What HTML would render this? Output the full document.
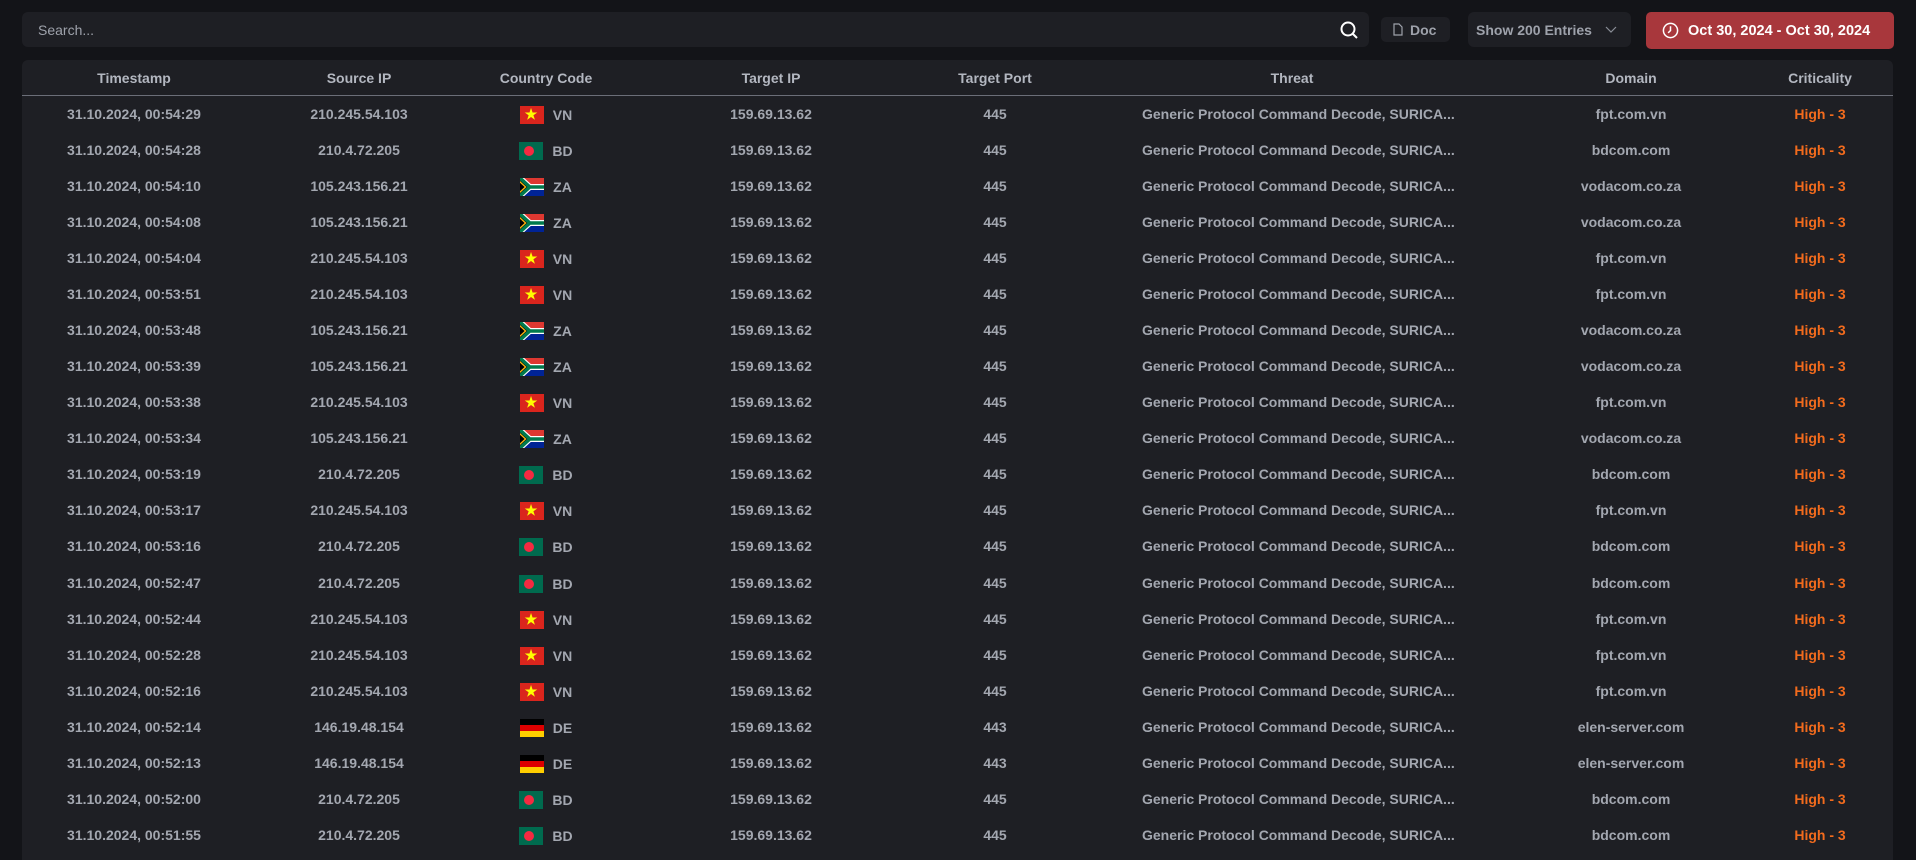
<!DOCTYPE html>
<html><head><meta charset="utf-8"><style>
*{margin:0;padding:0;box-sizing:border-box}
body{width:1916px;height:849px;background:#131418;font-family:"Liberation Sans",sans-serif;overflow:hidden;position:relative;color:#a3a7b0}
.search{position:absolute;left:22px;top:12px;width:1347px;height:35px;background:#1e1f24;border-radius:6px;font-size:14px;color:#9ea2ab;padding:10px 16px}
.search svg{position:absolute;right:10px;top:8px}
.doc{position:absolute;left:1381px;top:17px;width:69px;height:25px;background:#1e1f24;border-radius:5px;font-size:14px;font-weight:bold;color:#9ea2ab;padding:5px 0 0 29px}
.doc svg{position:absolute;left:12px;top:6px}
.show{position:absolute;left:1468px;top:12px;width:163px;height:35px;background:#1e1f24;border-radius:6px;font-size:14px;font-weight:bold;color:#9ea2ab;padding:10px 0 0 8px}
.show svg{position:absolute;right:14px;top:14px}
.date{position:absolute;left:1646px;top:12px;width:248px;height:37px;background:#a8373c;border-radius:5px;font-size:14.5px;font-weight:bold;color:#fff;padding:11px 0 0 42px}
.date svg{position:absolute;left:16px;top:10px}
.panel{position:absolute;left:22px;top:60px;width:1871px;height:800px;background:#1e1f24;border-radius:6px 6px 0 0}
.hline{position:absolute;left:22px;top:95px;width:1871px;height:1px;background:#6b6e78}
.c{position:absolute;width:300px;text-align:center;font-size:14px;font-weight:bold;white-space:nowrap}
.h .c{top:70px;color:#b3b7c0}
.r{position:absolute;left:0;width:1916px;height:36px}
.r .c{top:10px}
.c1{left:-16px}.c2{left:209px}.c3{left:396px}.c4{left:621px}.c5{left:845px}.c6{left:1142px}.c7{left:1481px}.c8{left:1670px;color:#f26b1d}
.f{display:inline-block;width:24px;height:18px;vertical-align:-4px;margin-right:9px;position:relative;overflow:hidden}
.vn{background:#da251d}.vn:after{content:"★";position:absolute;left:5px;top:0px;color:#ff0;font-size:14px}
.bd{background:#006a4e}.bd:after{content:"";position:absolute;left:5px;top:4px;width:10px;height:10px;border-radius:50%;background:#f42a41}
.de{background:linear-gradient(#000 33%,#dd0000 33%,#dd0000 66%,#ffce00 66%)}
</style></head><body>
<div class="search">Search...<svg width="20" height="20" viewBox="0 0 20 20" fill="none" stroke="#fff" stroke-width="2"><circle cx="9" cy="9" r="6.5"/><path d="M14 14l4 4"/></svg></div>
<div class="doc"><svg width="10" height="13" viewBox="0 0 10 13" fill="none" stroke="#9ea2ab" stroke-width="1.2"><path d="M1 1h5l3 3v8H1z"/></svg>Doc</div>
<div class="show">Show 200 Entries<svg width="12" height="8" viewBox="0 0 12 8" fill="none" stroke="#8a8e97" stroke-width="1.2"><path d="M1 1l5 5 5-5"/></svg></div>
<div class="date"><svg width="17" height="17" viewBox="0 0 18 18" fill="none" stroke="#fff" stroke-width="1.6"><circle cx="9" cy="9" r="7.5"/><path d="M9 4.5V9l-2.5 2.5"/></svg>Oct 30, 2024 - Oct 30, 2024</div>
<div class="panel"></div>
<div class="hline"></div>
<div class="h"><div class="c c1">Timestamp</div><div class="c c2">Source IP</div><div class="c c3">Country Code</div><div class="c c4">Target IP</div><div class="c c5">Target Port</div><div class="c c6">Threat</div><div class="c c7">Domain</div><div class="c c8" style="color:#b3b7c0">Criticality</div></div>
<svg width="0" height="0" style="position:absolute"><defs><symbol id="za" viewBox="0 0 22 15" preserveAspectRatio="none"><rect width="22" height="15" fill="#de3831"/><rect y="7.5" width="22" height="7.5" fill="#002395"/><path d="M0 0l9 7.5L0 15z" fill="#fff"/><path d="M0 0l9 7.5L0 15M9 7.5H22" stroke="#fff" stroke-width="5"/><path d="M0 0l9 7.5L0 15M9 7.5H22" stroke="#007a4d" stroke-width="3"/><path d="M0 2.5l6 5-6 5z" fill="#ffb612"/><path d="M0 4l4.2 3.5L0 11z" fill="#000"/></symbol></defs></svg>
<div class="r" style="top:96px"><div class="c c1">31.10.2024, 00:54:29</div><div class="c c2">210.245.54.103</div><div class="c c3"><span class="f vn"></span>VN</div><div class="c c4">159.69.13.62</div><div class="c c5">445</div><div class="c c6">Generic Protocol Command Decode, SURICA...</div><div class="c c7">fpt.com.vn</div><div class="c c8">High - 3</div></div>
<div class="r" style="top:132px"><div class="c c1">31.10.2024, 00:54:28</div><div class="c c2">210.4.72.205</div><div class="c c3"><span class="f bd"></span>BD</div><div class="c c4">159.69.13.62</div><div class="c c5">445</div><div class="c c6">Generic Protocol Command Decode, SURICA...</div><div class="c c7">bdcom.com</div><div class="c c8">High - 3</div></div>
<div class="r" style="top:168px"><div class="c c1">31.10.2024, 00:54:10</div><div class="c c2">105.243.156.21</div><div class="c c3"><svg class="f"><use href="#za"/></svg>ZA</div><div class="c c4">159.69.13.62</div><div class="c c5">445</div><div class="c c6">Generic Protocol Command Decode, SURICA...</div><div class="c c7">vodacom.co.za</div><div class="c c8">High - 3</div></div>
<div class="r" style="top:204px"><div class="c c1">31.10.2024, 00:54:08</div><div class="c c2">105.243.156.21</div><div class="c c3"><svg class="f"><use href="#za"/></svg>ZA</div><div class="c c4">159.69.13.62</div><div class="c c5">445</div><div class="c c6">Generic Protocol Command Decode, SURICA...</div><div class="c c7">vodacom.co.za</div><div class="c c8">High - 3</div></div>
<div class="r" style="top:240px"><div class="c c1">31.10.2024, 00:54:04</div><div class="c c2">210.245.54.103</div><div class="c c3"><span class="f vn"></span>VN</div><div class="c c4">159.69.13.62</div><div class="c c5">445</div><div class="c c6">Generic Protocol Command Decode, SURICA...</div><div class="c c7">fpt.com.vn</div><div class="c c8">High - 3</div></div>
<div class="r" style="top:276px"><div class="c c1">31.10.2024, 00:53:51</div><div class="c c2">210.245.54.103</div><div class="c c3"><span class="f vn"></span>VN</div><div class="c c4">159.69.13.62</div><div class="c c5">445</div><div class="c c6">Generic Protocol Command Decode, SURICA...</div><div class="c c7">fpt.com.vn</div><div class="c c8">High - 3</div></div>
<div class="r" style="top:312px"><div class="c c1">31.10.2024, 00:53:48</div><div class="c c2">105.243.156.21</div><div class="c c3"><svg class="f"><use href="#za"/></svg>ZA</div><div class="c c4">159.69.13.62</div><div class="c c5">445</div><div class="c c6">Generic Protocol Command Decode, SURICA...</div><div class="c c7">vodacom.co.za</div><div class="c c8">High - 3</div></div>
<div class="r" style="top:348px"><div class="c c1">31.10.2024, 00:53:39</div><div class="c c2">105.243.156.21</div><div class="c c3"><svg class="f"><use href="#za"/></svg>ZA</div><div class="c c4">159.69.13.62</div><div class="c c5">445</div><div class="c c6">Generic Protocol Command Decode, SURICA...</div><div class="c c7">vodacom.co.za</div><div class="c c8">High - 3</div></div>
<div class="r" style="top:384px"><div class="c c1">31.10.2024, 00:53:38</div><div class="c c2">210.245.54.103</div><div class="c c3"><span class="f vn"></span>VN</div><div class="c c4">159.69.13.62</div><div class="c c5">445</div><div class="c c6">Generic Protocol Command Decode, SURICA...</div><div class="c c7">fpt.com.vn</div><div class="c c8">High - 3</div></div>
<div class="r" style="top:420px"><div class="c c1">31.10.2024, 00:53:34</div><div class="c c2">105.243.156.21</div><div class="c c3"><svg class="f"><use href="#za"/></svg>ZA</div><div class="c c4">159.69.13.62</div><div class="c c5">445</div><div class="c c6">Generic Protocol Command Decode, SURICA...</div><div class="c c7">vodacom.co.za</div><div class="c c8">High - 3</div></div>
<div class="r" style="top:456px"><div class="c c1">31.10.2024, 00:53:19</div><div class="c c2">210.4.72.205</div><div class="c c3"><span class="f bd"></span>BD</div><div class="c c4">159.69.13.62</div><div class="c c5">445</div><div class="c c6">Generic Protocol Command Decode, SURICA...</div><div class="c c7">bdcom.com</div><div class="c c8">High - 3</div></div>
<div class="r" style="top:492px"><div class="c c1">31.10.2024, 00:53:17</div><div class="c c2">210.245.54.103</div><div class="c c3"><span class="f vn"></span>VN</div><div class="c c4">159.69.13.62</div><div class="c c5">445</div><div class="c c6">Generic Protocol Command Decode, SURICA...</div><div class="c c7">fpt.com.vn</div><div class="c c8">High - 3</div></div>
<div class="r" style="top:528px"><div class="c c1">31.10.2024, 00:53:16</div><div class="c c2">210.4.72.205</div><div class="c c3"><span class="f bd"></span>BD</div><div class="c c4">159.69.13.62</div><div class="c c5">445</div><div class="c c6">Generic Protocol Command Decode, SURICA...</div><div class="c c7">bdcom.com</div><div class="c c8">High - 3</div></div>
<div class="r" style="top:565px"><div class="c c1">31.10.2024, 00:52:47</div><div class="c c2">210.4.72.205</div><div class="c c3"><span class="f bd"></span>BD</div><div class="c c4">159.69.13.62</div><div class="c c5">445</div><div class="c c6">Generic Protocol Command Decode, SURICA...</div><div class="c c7">bdcom.com</div><div class="c c8">High - 3</div></div>
<div class="r" style="top:601px"><div class="c c1">31.10.2024, 00:52:44</div><div class="c c2">210.245.54.103</div><div class="c c3"><span class="f vn"></span>VN</div><div class="c c4">159.69.13.62</div><div class="c c5">445</div><div class="c c6">Generic Protocol Command Decode, SURICA...</div><div class="c c7">fpt.com.vn</div><div class="c c8">High - 3</div></div>
<div class="r" style="top:637px"><div class="c c1">31.10.2024, 00:52:28</div><div class="c c2">210.245.54.103</div><div class="c c3"><span class="f vn"></span>VN</div><div class="c c4">159.69.13.62</div><div class="c c5">445</div><div class="c c6">Generic Protocol Command Decode, SURICA...</div><div class="c c7">fpt.com.vn</div><div class="c c8">High - 3</div></div>
<div class="r" style="top:673px"><div class="c c1">31.10.2024, 00:52:16</div><div class="c c2">210.245.54.103</div><div class="c c3"><span class="f vn"></span>VN</div><div class="c c4">159.69.13.62</div><div class="c c5">445</div><div class="c c6">Generic Protocol Command Decode, SURICA...</div><div class="c c7">fpt.com.vn</div><div class="c c8">High - 3</div></div>
<div class="r" style="top:709px"><div class="c c1">31.10.2024, 00:52:14</div><div class="c c2">146.19.48.154</div><div class="c c3"><span class="f de"></span>DE</div><div class="c c4">159.69.13.62</div><div class="c c5">443</div><div class="c c6">Generic Protocol Command Decode, SURICA...</div><div class="c c7">elen-server.com</div><div class="c c8">High - 3</div></div>
<div class="r" style="top:745px"><div class="c c1">31.10.2024, 00:52:13</div><div class="c c2">146.19.48.154</div><div class="c c3"><span class="f de"></span>DE</div><div class="c c4">159.69.13.62</div><div class="c c5">443</div><div class="c c6">Generic Protocol Command Decode, SURICA...</div><div class="c c7">elen-server.com</div><div class="c c8">High - 3</div></div>
<div class="r" style="top:781px"><div class="c c1">31.10.2024, 00:52:00</div><div class="c c2">210.4.72.205</div><div class="c c3"><span class="f bd"></span>BD</div><div class="c c4">159.69.13.62</div><div class="c c5">445</div><div class="c c6">Generic Protocol Command Decode, SURICA...</div><div class="c c7">bdcom.com</div><div class="c c8">High - 3</div></div>
<div class="r" style="top:817px"><div class="c c1">31.10.2024, 00:51:55</div><div class="c c2">210.4.72.205</div><div class="c c3"><span class="f bd"></span>BD</div><div class="c c4">159.69.13.62</div><div class="c c5">445</div><div class="c c6">Generic Protocol Command Decode, SURICA...</div><div class="c c7">bdcom.com</div><div class="c c8">High - 3</div></div>
</body></html>
